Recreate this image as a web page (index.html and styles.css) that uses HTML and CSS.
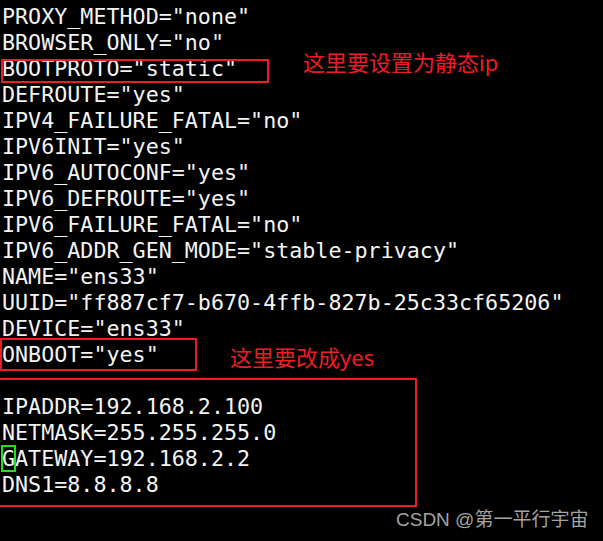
FILE: index.html
```html
<!DOCTYPE html>
<html>
<head>
<meta charset="utf-8">
<link rel="stylesheet" href="styles.css">
</head>
<body>
<div class="term">
<pre class="code">PROXY_METHOD="none"
BROWSER_ONLY="no"
BOOTPROTO="static"
DEFROUTE="yes"
IPV4_FAILURE_FATAL="no"
IPV6INIT="yes"
IPV6_AUTOCONF="yes"
IPV6_DEFROUTE="yes"
IPV6_FAILURE_FATAL="no"
IPV6_ADDR_GEN_MODE="stable-privacy"
NAME="ens33"
UUID="ff887cf7-b670-4ffb-827b-25c33cf65206"
DEVICE="ens33"
ONBOOT="yes"

IPADDR=192.168.2.100
NETMASK=255.255.255.0
<span class="cursor">G</span>ATEWAY=192.168.2.2
DNS1=8.8.8.8</pre>
<div class="mark mark-proto"></div>
<div class="note note-proto">这里要设置为静态ip</div>
<div class="mark mark-onboot"></div>
<div class="note note-onboot">这里要改成yes</div>
<div class="mark mark-ip"></div>
<div class="watermark">CSDN @第一平行宇宙</div>
</div>
</body>
</html>
```
FILE: styles.css
```css
html, body {
  margin: 0;
  padding: 0;
  background: #000;
}
.term {
  position: relative;
  width: 603px;
  height: 541px;
  overflow: hidden;
  background: #000;
}
.code {
  margin: 0;
  padding: 4px 0 0 2px;
  font-family: "DejaVu Sans Mono", monospace;
  font-size: 21.7px;
  line-height: 26px;
  color: #f4f4f4;
}
.cursor {
  outline: 2px solid #1fe01f;
  outline-offset: -1px;
}
.mark {
  position: absolute;
  border: 2px solid #ec1c24;
  box-sizing: border-box;
}
.mark-proto {
  left: 1px;
  top: 59px;
  width: 268px;
  height: 24px;
}
.mark-onboot {
  left: 0;
  top: 338px;
  width: 197px;
  height: 33px;
}
.mark-ip {
  left: -3px;
  top: 378px;
  width: 420px;
  height: 129px;
}
.note {
  position: absolute;
  font-family: "Noto Sans", "Noto Sans CJK SC", sans-serif;
  font-size: 22px;
  line-height: 26px;
  color: #ee1c24;
  white-space: nowrap;
}
.note-proto {
  left: 303px;
  top: 49px;
}
.note-onboot {
  left: 230px;
  top: 344px;
}
.watermark {
  position: absolute;
  left: 396px;
  top: 508px;
  font-family: "Liberation Sans", "Noto Sans CJK SC", sans-serif;
  font-size: 19px;
  line-height: 24px;
  color: #a3a3a3;
  white-space: nowrap;
}
```
